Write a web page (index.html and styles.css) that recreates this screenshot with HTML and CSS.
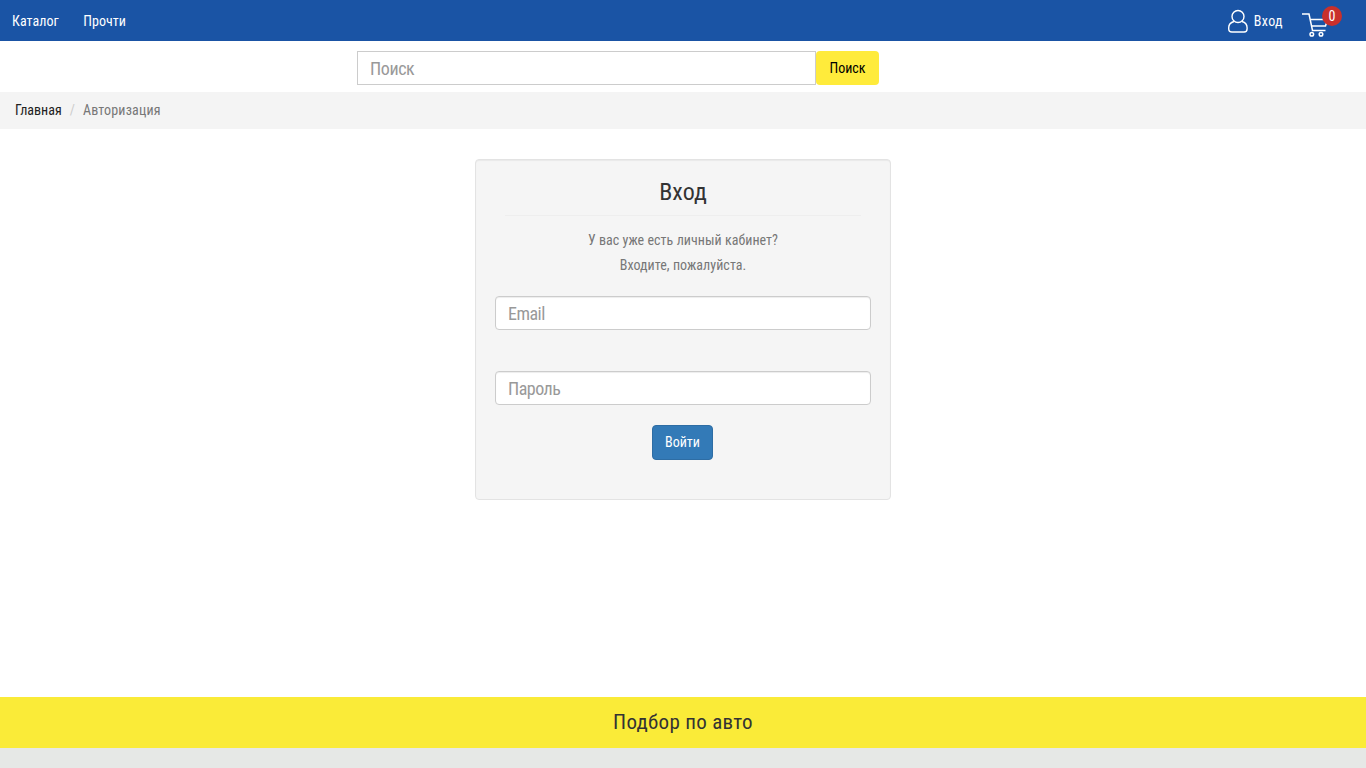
FILE: index.html
```html
<!DOCTYPE html>
<html lang="ru">
<head>
<meta charset="utf-8">
<title>Авторизация</title>
<link rel="stylesheet" href="styles.css">
</head>
<body>
<div class="page">
  <header class="topbar">
    <nav class="topnav">
      <a href="#">Каталог</a>
      <a href="#">Прочти</a>
    </nav>
    <div class="topright">
      <a href="#" class="login">
        <svg class="user-ico" width="22" height="25" viewBox="0 0 22 25" fill="none" stroke="#fff" stroke-width="1.4">
          <circle cx="11" cy="8.5" r="6"/>
          <path d="M7 13.500C3.600 14.500 1.700 16.800 1.700 19.800V20.800c0 2 1.300 3.200 3.200 3.200h12.200c1.900 0 3-1.200 3-3.200v-1C20.100 16.800 18.400 14.500 15 13.500"/>
        </svg>
        <span class="login-text">Вход</span>
      </a>
      <a href="#" class="cart">
        <svg width="26" height="25" viewBox="0 0 26 25" fill="none" stroke="#fff" stroke-width="1.500">
          <path d="M0 1H7L10.500 17.500H23.500"/>
          <path d="M8.200 6.500H25.500L23.500 13H9.500"/>
          <circle cx="9.800" cy="21.300" r="1.800"/>
          <circle cx="19" cy="21.300" r="1.800"/>
        </svg>
        <span class="badge">0</span>
      </a>
    </div>
  </header>
  <form class="searchbar">
    <input class="search-input" type="text" placeholder="Поиск">
    <button class="search-btn" type="button">Поиск</button>
  </form>
  <ol class="crumbs">
    <li><a href="#">Главная</a></li>
    <li class="sep">/</li>
    <li class="current">Авторизация</li>
  </ol>
  <main class="content">
    <section class="card">
      <h2 class="card-title">Вход</h2>
      <p class="card-text">У вас уже есть личный кабинет?</p>
      <p class="card-text">Входите, пожалуйста.</p>
      <input class="field field-email" type="text" placeholder="Email">
      <input class="field field-pass" type="password" placeholder="Пароль">
      <button class="submit" type="button">Войти</button>
    </section>
  </main>
  <footer class="footer">
    <div class="pick">Подбор по авто</div>
    <div class="bottom"></div>
  </footer>
</div>
</body>
</html>
```
FILE: styles.css
```css
* { box-sizing: border-box; }
html, body { margin: 0; height: 100%; }
body {
  font-family: "Roboto Condensed", Roboto, "Liberation Sans", sans-serif;
  font-stretch: 75%;
  font-weight: 400;
  letter-spacing: 0.05px;
  font-size: 14px;
  line-height: 20px;
  color: #333;
  background: #fff;
}
a { color: inherit; text-decoration: none; }
.page { height: 768px; display: flex; flex-direction: column; overflow: hidden; }
.topbar {
  height: 41px;
  background: #1a54a5;
  color: #fff;
  display: flex;
  justify-content: space-between;
  align-items: center;
  padding: 0 24px 0 12px;
}
.topnav { display: flex; gap: 24.500px; }
.topright { display: flex; align-items: center; gap: 19px; }
.login { display: flex; align-items: center; gap: 5px; }
.login-text { letter-spacing: 0.4px; }
.cart { display: block; position: relative; width: 40px; height: 25px; margin-top: 10px; }
.cart svg { display: block; }
.badge {
  position: absolute;
  left: 20px;
  top: -7px;
  width: 20px;
  height: 20px;
  border-radius: 50%;
  background: #c9302c;
  color: #fff;
  text-align: center;
  font-size: 14px;
  line-height: 20px;
}
.searchbar { height: 51px; display: flex; align-items: flex-start; padding: 10px 0 0 357px; }
.search-input {
  width: 459px;
  height: 34px;
  border: 1px solid #ccc;
  padding: 0 12px;
  font: inherit;
  font-size: 18px;
  letter-spacing: -0.4px;
  outline: none;
}
.search-btn {
  width: 63px;
  height: 34px;
  border: 0;
  border-radius: 4px;
  background: #ffeb3b;
  color: #000;
  font: inherit;
  padding: 0;
}
::placeholder { color: #999; opacity: 1; }
.crumbs {
  list-style: none;
  margin: 0;
  height: 37px;
  padding: 0 15px 2px;
  background: #f4f4f4;
  display: flex;
  align-items: center;
  gap: 8px;
  color: #777;
}
.crumbs a { color: #222; letter-spacing: 0; }
.current { letter-spacing: 0.16px; }
.sep { color: #ccc; }
.content { flex: 1; padding-top: 30px; }
.card {
  width: 416px;
  height: 341px;
  margin: 0 auto;
  background: #f5f5f5;
  border: 1px solid #e3e3e3;
  border-radius: 4px;
  box-shadow: inset 0 1px 1px rgba(0,0,0,.05);
  padding: 19px;
  display: flex;
  flex-direction: column;
  align-items: center;
}
.card-title {
  width: 356px;
  margin: 0 0 14px;
  font-size: 24px;
  font-weight: 400;
  line-height: 26px;
  height: 37px;
  text-align: center;
  border-bottom: 1px solid #eee;
}
.card-text { margin: 0 0 5px; color: #777; line-height: 20px; text-align: center; }
.field {
  width: 376px;
  height: 34px;
  flex: none;
  background: #fff;
  border: 1px solid #ccc;
  border-radius: 4px;
  box-shadow: inset 0 1px 1px rgba(0,0,0,.075);
  padding: 0 12px;
  font: inherit;
  font-size: 18px;
  letter-spacing: -0.5px;
  outline: none;
}
.field-email { margin-top: 16px; }
.field-pass { margin-top: 41px; }
.submit {
  margin-top: 20px;
  margin-right: 1px;
  width: 61px;
  height: 35px;
  padding: 0 0 2px;
  border: 1px solid #2e6da4;
  border-radius: 4px;
  background: #337ab7;
  color: #fff;
  font: inherit;
}
.footer { flex: none; }
.pick {
  height: 51px;
  background: #faeb38;
  font-size: 21px;
  letter-spacing: 0.3px;
  line-height: 51px;
  text-align: center;
}
.bottom { height: 20px; background: #e6e8e6; }
```
